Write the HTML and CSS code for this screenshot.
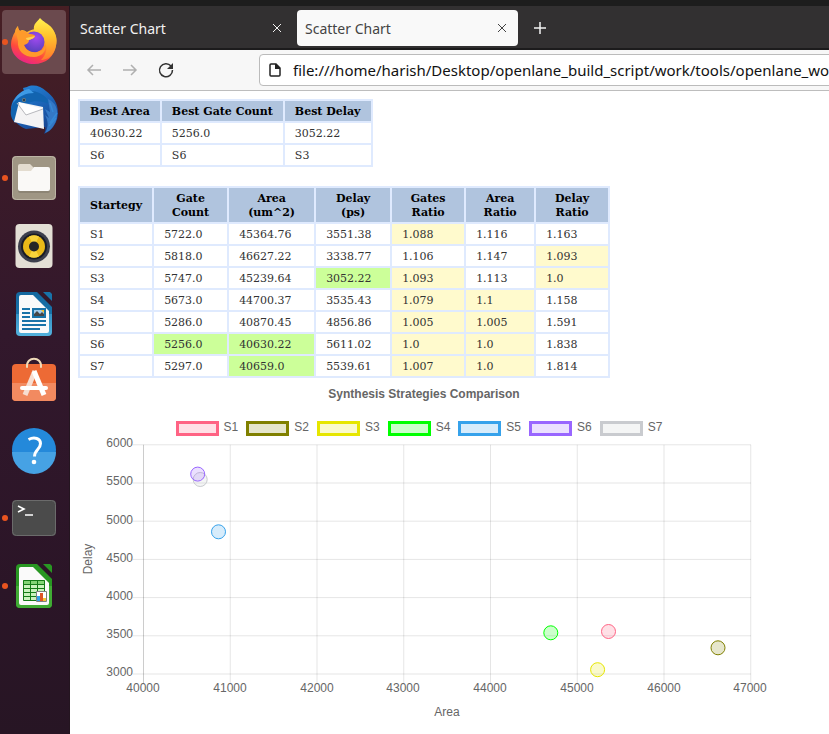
FILE: index.html
```html
<!DOCTYPE html>
<html lang="en">
<head>
<meta charset="utf-8">
<title>Scatter Chart</title>
<link rel="stylesheet" href="styles.css">
</head>
<body>
<div class="desktop">
  <nav class="dock" aria-label="Dock">
    <button class="app app-active app-running" aria-label="Firefox">
      <svg viewBox="0 0 48 48">
        <defs>
          <linearGradient id="fx" x1="0.8" y1="0" x2="0.3" y2="1"><stop offset="0" stop-color="#fff04a"/><stop offset="0.4" stop-color="#ffa02a"/><stop offset="0.7" stop-color="#ff4a3c"/><stop offset="1" stop-color="#e8218c"/></linearGradient>
          <radialGradient id="globe" cx="0.6" cy="0.3" r="0.8"><stop offset="0" stop-color="#a24af0"/><stop offset="1" stop-color="#4d3fb5"/></radialGradient>
          <linearGradient id="tail" x1="0.6" y1="0" x2="0.6" y2="1"><stop offset="0" stop-color="#fff250"/><stop offset="0.45" stop-color="#ffc02c"/><stop offset="1" stop-color="#ff7a2c"/></linearGradient>
        </defs>
        <path fill="url(#fx)" d="M8 8c0 3 1 4 2 5 2-2 4-1 7 1 7-4 13-4 17-2l8-1c4 5 5 10 4 16-1 11-10 19-22 19S1 38 1 26c0-4 2-9 4-12 0-2 1-4 3-6z"/>
        <path fill="url(#tail)" d="M30 0c3 4 8 5 12 10 6 8 6 17 1 25-3 5-8 7-12 7 5-5 7-12 4-18-3-5-10-5-11-12-1-6 3-8 6-12z"/>
        <circle cx="24" cy="24" r="10.500" fill="url(#globe)"/>
        <path fill="#ff9a2b" d="M8 8c0 3 1 4 2 5 3-2 7 2 10 3 3 0 5 1 5 2-1 3-4 3-6 4 0 3-2 4-5 5 2 5 7 8 13 7 4-1 7-3 9-7 0 7-5 12-12 12-10 0-17-6-16-16-1-5-3-10 0-15z"/>
        <path fill="#ffd052" d="M16 20l9-2c-1 3-4 3-6 4-1 0-3 0-3-2z"/>
      </svg>
    </button>
    <button class="app" aria-label="Thunderbird">
      <svg viewBox="0 0 48 48">
        <defs><linearGradient id="tb" x1="0.2" y1="0" x2="0.8" y2="1"><stop offset="0" stop-color="#2384d8"/><stop offset="0.5" stop-color="#1c62b5"/><stop offset="1" stop-color="#173c86"/></linearGradient></defs>
        <path fill="url(#tb)" d="M17 1c6-3 14-1 19 4 7 5 12 12 12 22 0 9-6 18-14 21 1-3 2-5 1-7l-19 2c-8-3-15-10-15-19 0-9 5-15 13-19l-1-3z"/>
        <path fill="#1264b0" d="M2 20c3-9 11-15 20-15 9 1 15 6 18 13-8-3-15-4-22-1L5 37C0 31 0 26 2 20z"/>
        <path fill="#f4f3f4" d="M9 16l24 5 1 22L4 36z"/>
        <path fill="#fff" d="M8 16l25 7-17 6z"/>
        <path fill="none" stroke="#b8b8bd" d="M7 17l9 12 17-6"/>
        <path fill="#3e9ae5" d="M3 17c3-8 9-13 16-14l5 4c-8 0-15 3-21 10z"/>
        <path fill="#3478c5" d="M38 13c8 4 10 10 9 18-1 7-6 14-12 16 4-7 3-12 0-18l4 3-4-9 5 3z"/>
        <path fill="none" stroke="#3588d6" stroke-width="1.500" d="M47 27l-7 10M46 32l-7 8M40 17l3 9"/>
        <circle cx="14" cy="14" r="2" fill="#6d7a7d"/><circle cx="14" cy="14" r="1" fill="#17314e"/>
      </svg>
    </button>
    <button class="app app-running" aria-label="Files">
      <svg viewBox="0 0 48 48"><rect x="2" y="2" width="44" height="44" rx="4" fill="#9f9684"/><rect x="2.500" y="2.500" width="43" height="43" rx="4" fill="none" stroke="#bcb5a5"/><path fill="#8d8575" d="M8 20h32v17a2 2 0 0 1-2 2H10a2 2 0 0 1-2-2z"/><path fill="#e3dccf" d="M8 12a2 2 0 0 1 2-2h10l4 4-2 5H8z"/><path fill="#faf9f7" d="M8 17h13l3-4h14a2 2 0 0 1 2 2v20a2 2 0 0 1-2 2H10a2 2 0 0 1-2-2z"/></svg>
    </button>
    <button class="app" aria-label="Rhythmbox">
      <svg viewBox="0 0 48 48"><rect x="5.500" y="2" width="37" height="44" rx="4" fill="#e3dfd5"/><circle cx="24" cy="24.500" r="16" fill="#3c3f4c"/><circle cx="24" cy="24.500" r="13" fill="#191c25"/><circle cx="24" cy="24.500" r="11" fill="#e9b918"/><path fill="#f7d33b" d="M24 24.500l-5-10a11 11 0 0 1 10 0zM24 24.500l5 10a11 11 0 0 1-10 0z"/><circle cx="24" cy="24.500" r="5" fill="#242526"/></svg>
    </button>
    <button class="app" aria-label="LibreOffice Writer">
      <svg viewBox="0 0 48 48">
        <defs><linearGradient id="wr" x1="0" y1="0" x2="0" y2="1"><stop offset="0" stop-color="#14679e"/><stop offset="0.500" stop-color="#1873a9"/><stop offset="0.500" stop-color="#3391c4"/><stop offset="1" stop-color="#53b2dd"/></linearGradient></defs>
        <path fill="url(#wr)" d="M10 2h17l15 15v25a4 4 0 0 1-4 4H10a4 4 0 0 1-4-4V6a4 4 0 0 1 4-4z"/><path fill="#fafafa" d="M11 5h12l16 16v20a2 2 0 0 1-2 2H11a2 2 0 0 1-2-2V7a2 2 0 0 1 2-2z"/><path fill="#1873a9" d="M33 2h7l2 2v7z"/>
        <path stroke="#1973a8" stroke-width="2" d="M12 19h8M12 23h8M12 27h8M12 31h24M12 35h24M12 39h18"/><rect x="23" y="19" width="12" height="8" fill="#9fcced" stroke="#1973a8" stroke-width="2"/><path fill="#464646" d="M24 26v-2l3-3 3 3 2-2 2 2v2z"/><path fill="#f5be27" d="M31 20h3v3z"/>
      </svg>
    </button>
    <button class="app" aria-label="Ubuntu Software">
      <svg viewBox="0 0 48 48">
        <rect x="2" y="6" width="44" height="37" rx="4" fill="#ed6a35"/><path fill="#f28a60" d="M2 25h44v14a4 4 0 0 1-4 4H6a4 4 0 0 1-4-4z"/><path fill="none" stroke="#f0dbb9" stroke-width="2" stroke-linecap="round" d="M17 9C16-2 32-2 31 9"/>
        <path fill="none" stroke="#f7ded2" stroke-width="5" d="M25 13l-10 24"/><path fill="none" stroke="#fff" stroke-width="5" d="M24 13l10 24"/><path stroke="#fff" stroke-width="4" stroke-linecap="round" d="M12 30h24"/>
      </svg>
    </button>
    <button class="app" aria-label="Help">
      <svg viewBox="0 0 48 48"><circle cx="24" cy="24" r="22" fill="#2489da"/><path fill="#46a2e4" d="M2 26h44a22 22 0 0 1-44 0z"/><path fill="none" stroke="#fff" stroke-width="3" d="M18.500 13.500c6-3 12-1 12 4 0 6-6 6-6 13"/><circle cx="24" cy="36" r="2.300" fill="#fff"/></svg>
    </button>
    <button class="app app-running" aria-label="Terminal">
      <svg viewBox="0 0 48 48"><rect x="2" y="6" width="44" height="36" rx="4" fill="#4b4b4b"/><rect x="2.500" y="6.500" width="43" height="35" rx="4" fill="none" stroke="#6b6b6b"/><path fill="none" stroke="#fff" stroke-width="1.600" d="M8 12l6 3-6 3M15 21h8"/></svg>
    </button>
    <button class="app app-running" aria-label="LibreOffice Calc">
      <svg viewBox="0 0 48 48">
        <path fill="#289722" d="M10 2h17l15 15v25a4 4 0 0 1-4 4H10a4 4 0 0 1-4-4V6a4 4 0 0 1 4-4z"/><path fill="#40ab34" d="M6 24h36v18a4 4 0 0 1-4 4H10a4 4 0 0 1-4-4z"/><path fill="#fafafa" d="M11 5h12l16 16v20a2 2 0 0 1-2 2H11a2 2 0 0 1-2-2V7a2 2 0 0 1 2-2z"/><path fill="#289722" d="M33 2h7l2 2v7z"/>
        <path fill="#c9f2bd" d="M13 18h22v20H13z"/><path fill="#83d476" d="M13 18h22v5H13z"/><path fill="none" stroke="#147a17" d="M13.500 18.500h21v20h-21zM13.500 22.500h21M13.500 26.500h21M13.500 30.500h21M13.500 34.500h21M20.500 18v20M27.500 18v20"/>
        <path fill="#fff" stroke="#808080" d="M26.500 29.500h10v10h-10z"/><path fill="#34a1e6" d="M27 34h3v5h-3z"/><path fill="#dd5526" d="M30 31h3v8h-3z"/><path fill="#f4c430" d="M33 36h3v3h-3z"/>
      </svg>
    </button>
  </nav>

  <div class="browser">
    <header>
      <div class="tabs">
        <div class="tab"><span>Scatter Chart</span><button class="close" aria-label="Close tab"><svg viewBox="0 0 8 8"><path d="M0 0l8 8M8 0L0 8"/></svg></button></div>
        <div class="tab tab-active"><span>Scatter Chart</span><button class="close" aria-label="Close tab"><svg viewBox="0 0 8 8"><path d="M0 0l8 8M8 0L0 8"/></svg></button></div>
        <button class="new-tab" aria-label="New tab"><svg viewBox="0 0 12 12"><path d="M6 0v12M0 6h12"/></svg></button>
      </div>
      <div class="toolbar">
        <button class="tool tool-off" aria-label="Back"><svg viewBox="0 0 16 16"><path d="M15 8H2M7 3L2 8l5 5"/></svg></button>
        <button class="tool tool-off" aria-label="Forward"><svg viewBox="0 0 16 16"><path d="M1 8h13M9 3l5 5-5 5"/></svg></button>
        <button class="tool" aria-label="Reload"><svg viewBox="0 0 16 16"><path d="M13 4a6.500 6.500 0 1 0 1.500 4"/><path class="solid" d="M15 1v6H9z"/></svg></button>
        <div class="address">
          <svg viewBox="0 0 12 14"><path d="M1 2a1 1 0 0 1 1-1h5l4 4v7a1 1 0 0 1-1 1H2a1 1 0 0 1-1-1z"/><path class="solid" d="M6 1h1l4 4v1H6z"/></svg>
          <input type="text" aria-label="Address" value="file:///home/harish/Desktop/openlane_build_script/work/tools/openlane_wo">
        </div>
      </div>
    </header>

    <main>
      <table>
        <thead><tr><th>Best Area</th><th>Best Gate Count</th><th>Best Delay</th></tr></thead>
        <tbody>
          <tr><td>40630.22</td><td>5256.0</td><td>3052.22</td></tr>
          <tr><td>S6</td><td>S6</td><td>S3</td></tr>
        </tbody>
      </table>

      <table>
        <colgroup><col class="c74"><col class="c75"><col class="c87"><col class="c76"><col class="c74"><col class="c70"><col class="c74"></colgroup>
        <thead><tr><th>Startegy</th><th>Gate<br>Count</th><th>Area<br>(um^2)</th><th>Delay<br>(ps)</th><th>Gates<br>Ratio</th><th>Area<br>Ratio</th><th>Delay<br>Ratio</th></tr></thead>
        <tbody>
          <tr><td>S1</td><td>5722.0</td><td>45364.76</td><td>3551.38</td><td class="near">1.088</td><td>1.116</td><td>1.163</td></tr>
          <tr><td>S2</td><td>5818.0</td><td>46627.22</td><td>3338.77</td><td>1.106</td><td>1.147</td><td class="near">1.093</td></tr>
          <tr><td>S3</td><td>5747.0</td><td>45239.64</td><td class="best">3052.22</td><td class="near">1.093</td><td>1.113</td><td class="near">1.0</td></tr>
          <tr><td>S4</td><td>5673.0</td><td>44700.37</td><td>3535.43</td><td class="near">1.079</td><td class="near">1.1</td><td>1.158</td></tr>
          <tr><td>S5</td><td>5286.0</td><td>40870.45</td><td>4856.86</td><td class="near">1.005</td><td class="near">1.005</td><td>1.591</td></tr>
          <tr><td>S6</td><td class="best">5256.0</td><td class="best">40630.22</td><td>5611.02</td><td class="near">1.0</td><td class="near">1.0</td><td>1.838</td></tr>
          <tr><td>S7</td><td>5297.0</td><td class="best">40659.0</td><td>5539.61</td><td class="near">1.007</td><td class="near">1.0</td><td>1.814</td></tr>
        </tbody>
      </table>

      <figure>
        <figcaption>Synthesis Strategies Comparison</figcaption>
        <ul class="legend">
          <li class="s1">S1</li><li class="s2">S2</li><li class="s3">S3</li><li class="s4">S4</li><li class="s5">S5</li><li class="s6">S6</li><li class="s7">S7</li>
        </ul>
        <svg class="plot" viewBox="0 0 692 290" role="img" aria-label="Delay against area">
          <path class="grid" d="M152.250 8.800v239M239 8.800v239M325.750 8.800v239M412.500 8.800v239M499.250 8.800v239M586 8.800v239M672.750 8.800v239"/>
          <path class="grid" d="M55 8.800h618M55 47h618M55 85.200h618M55 123.400h618M55 161.600h618M55 199.800h618M55 238h618"/>
          <path class="axis" d="M65.500 8.800v239"/>
          <g class="ticks-y"><text x="55" y="11">6000</text><text x="55" y="49">5500</text><text x="55" y="88">5000</text><text x="55" y="126">4500</text><text x="55" y="164">4000</text><text x="55" y="202">3500</text><text x="55" y="240">3000</text></g>
          <g class="ticks-x"><text x="65" y="256">40000</text><text x="152" y="256">41000</text><text x="239" y="256">42000</text><text x="325" y="256">43000</text><text x="412" y="256">44000</text><text x="499" y="256">45000</text><text x="586" y="256">46000</text><text x="672" y="256">47000</text><text x="369" y="280">Area</text><text transform="translate(14 123) rotate(-90)">Delay</text></g>
          <circle class="s7" cx="122.200" cy="43.500" r="7"/>
          <circle class="s6" cx="119.700" cy="38.100" r="7"/>
          <circle class="s5" cx="140.500" cy="95.800" r="7"/>
          <circle class="s4" cx="472.800" cy="196.800" r="7"/>
          <circle class="s3" cx="519.600" cy="233.700" r="7"/>
          <circle class="s2" cx="640" cy="211.800" r="7"/>
          <circle class="s1" cx="530.500" cy="195.500" r="7"/>
        </svg>
      </figure>
    </main>
  </div>
</div>
</body>
</html>
```
FILE: styles.css
```css
*, *::before { box-sizing: border-box; }

body {
  margin: 0;
  background: #fff;
  font-family: "DejaVu Serif", serif;
  overflow-x: hidden;
}

button {
  padding: 0;
  border: 0;
  background: none;
  font: inherit;
}

.desktop {
  display: flex;
  min-height: 100vh;
  border-top: 6px solid #1d1d1d;
}

/* Dock */
.dock {
  display: flex;
  flex: 0 0 70px;
  flex-direction: column;
  gap: 4px;
  padding: 4px 2px;
  background: linear-gradient(#471f24, #3a1a29 25%, #32182c 45%, #2b1527 80%, #271524);
  border-right: 1px solid #241520;
}

.app {
  position: relative;
  display: grid;
  place-items: center;
  width: 64px;
  height: 64px;
  border-radius: 4px;
}

.app svg { width: 48px; height: 48px; overflow: visible; }
.app-active { background: #6b4a4e; }

.app-running::before {
  content: "";
  position: absolute;
  left: 0;
  top: 29px;
  width: 6px;
  height: 6px;
  border-radius: 50%;
  background: #e95420;
}

/* Browser chrome */
.browser { flex: 1; min-width: 0; }
header { font-family: "Noto Sans", sans-serif; }

.tabs {
  display: flex;
  align-items: center;
  gap: 4px;
  height: 44px;
  padding-top: 2px;
  background: #323031;
  border-bottom: 2px solid #1c1b1c;
}

.tab {
  display: flex;
  align-items: center;
  justify-content: space-between;
  flex: 0 1 221px;
  height: 36px;
  padding: 0 12px 0 8px;
  border-radius: 4px;
  color: #f2f2f2;
  font-size: 14px;
}

.tab:first-child { flex-basis: 223px; padding-left: 10px; }
.tab-active { background: #f9f9f9; color: #444; }

.close, .new-tab, .tool { display: grid; place-items: center; }
.close { width: 8px; height: 8px; color: inherit; }
.new-tab { width: 36px; height: 36px; color: #f2f2f2; }
header svg { fill: none; stroke: currentColor; overflow: visible; }
.close svg { width: 8px; height: 8px; }
.new-tab svg { width: 12px; height: 12px; stroke-width: 1.5; }

.toolbar {
  display: flex;
  align-items: center;
  height: 41px;
  padding-left: 6px;
  overflow: hidden;
  background: #f7f7f7;
  border-bottom: 1px solid #bdbdbd;
}

.tool { flex: 0 0 36px; height: 36px; color: #333; }
.tool svg { width: 16px; height: 16px; stroke-width: 1.5; }
.tool-off { color: #b0b0b0; }
.solid { fill: currentColor; stroke: none; }

.address {
  display: flex;
  align-items: center;
  flex: 1;
  gap: 12px;
  height: 32px;
  margin: 0 -8px 0 75px;
  padding-left: 9px;
  background: #fff;
  border: 1px solid #bbb;
  border-radius: 4px;
  color: #222;
}

.address svg { flex: none; width: 12px; height: 14px; stroke-width: 1.5; }

.address input {
  flex: 1;
  min-width: 0;
  padding: 0;
  border: 0;
  outline: 0;
  background: none;
  color: #111;
  font: 15px "Noto Sans", sans-serif;
}

/* Page */
main { padding: 8px; }

table {
  margin-bottom: 19px;
  border-collapse: collapse;
  font-size: 11px;
  line-height: 14px;
  color: #333;
}

table + table { margin-bottom: 0; }
th, td { padding: 4px 10px 2px; border: 2px solid #dfeafe; text-align: left; }
th { background: #b0c4de; color: #000; text-align: center; }
.best { background: #ccff99; }
.near { background: #fffacd; }
.c70 { width: 70px; }
.c74 { width: 74px; }
.c75 { width: 75px; }
.c76 { width: 76px; }
.c87 { width: 87px; }

figure {
  max-width: 692px;
  margin: 0;
  color: #666;
  font: 12px/14px "Liberation Sans", sans-serif;
}

figcaption { padding: 9px 0 19px; font-weight: bold; text-align: center; }

.legend {
  display: flex;
  justify-content: center;
  gap: 8px;
  margin: 0;
  padding: 0 10px 0 0;
  list-style: none;
}

.legend li { display: flex; gap: 5px; height: 16px; }

.legend li::before {
  content: "";
  width: 43px;
  height: 15px;
  margin-top: 1px;
  border: 3px solid var(--line);
  background: var(--fill);
}

.s1 { --line: #ff6384; --fill: #ffe0e6; }
.s2 { --line: #808000; --fill: #e6e6cc; }
.s3 { --line: #e6e600; --fill: #fafacc; }
.s4 { --line: #00ff00; --fill: #ccffcc; }
.s5 { --line: #36a2eb; --fill: #d7ecfb; }
.s6 { --line: #9966ff; --fill: #ebe0ff; }
.s7 { --line: #c9cbcf; --fill: #f4f5f5; }

.plot { display: block; width: 100%; overflow: visible; fill: #666; }
.plot circle { fill: var(--line); fill-opacity: 0.2; stroke: var(--line); }
.grid { stroke: rgba(0, 0, 0, 0.1); }
.axis { stroke: rgba(0, 0, 0, 0.2); }
.ticks-y { text-anchor: end; }
.ticks-x { text-anchor: middle; }
```
